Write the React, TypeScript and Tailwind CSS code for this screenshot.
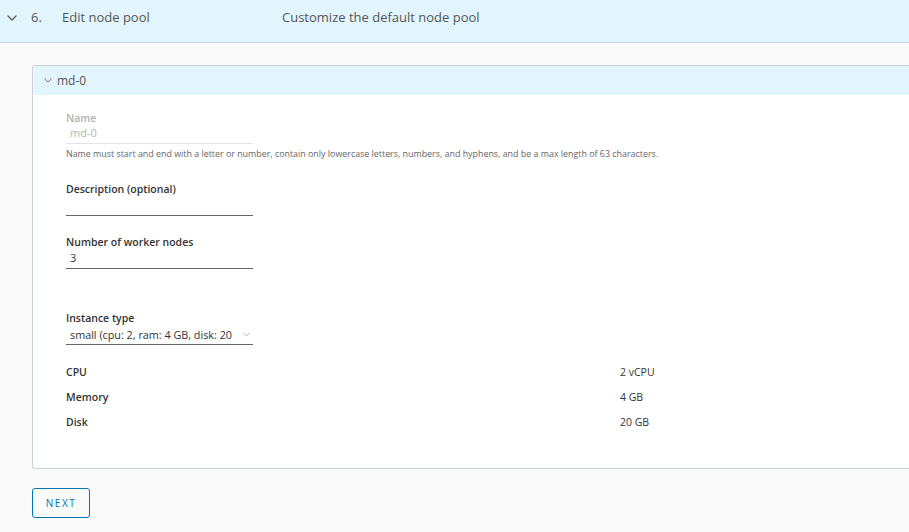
import React from "react";

function Chevron({ className }: { className?: string }) {
  return (
    <svg className={className} viewBox="0 0 10 6" fill="none">
      <path d="M1 1l4 4 4-4" stroke="currentColor" strokeWidth="1.2" strokeLinecap="round" strokeLinejoin="round" />
    </svg>
  );
}

export default function App() {
  return (
    <div className="w-[909px] h-[532px] overflow-hidden bg-[#fafafa] text-[#333]" style={{ fontFamily: "'Open Sans', 'Noto Sans', sans-serif" }}>
      <div className="h-[43px] bg-[#e2f5fd] border-b border-[#c9d4dd] flex items-center pb-[6px] text-[13px] text-[#565656]">
        <Chevron className="w-[10px] h-[6px] ml-[7px] mr-[14px] text-[#555]" />
        <span className="w-[31px]">6.</span>
        <span className="w-[220px]">Edit node pool</span>
        <span>Customize the default node pool</span>
      </div>
      <div className="pl-[32px] pt-[22px]">
        <div className="border border-r-0 border-[#ccd3d8] bg-white rounded-l-[3px] h-[404px]">
          <div className="h-[29px] bg-[#e2f5fd] flex items-center text-[12px] text-[#565656]">
            <Chevron className="w-[8px] h-[5px] ml-[11px] mr-[5px] text-[#666]" />
            <span>md-0</span>
          </div>
          <div className="pl-[33px] pt-[16px]">
            <div className="text-[10.5px] font-semibold text-[#b3b3b3] leading-[14px]">Name</div>
            <div className="w-[187px] border-b border-[#e3e3e3] h-[19px] pl-[4px] text-[11px] text-[#b3b3b3] leading-[16px]">md-0</div>
            <div className="text-[8.9px] text-[#666] mt-[4px] leading-[12px] whitespace-nowrap">Name must start and end with a letter or number, contain only lowercase letters, numbers, and hyphens, and be a max length of 63 characters.</div>

            <div className="mt-[22px] text-[10.5px] font-semibold text-[#333] leading-[14px]">Description (optional)</div>
            <div className="w-[187px] border-b border-[#666] h-[20px]"></div>

            <div className="mt-[19px] text-[10.5px] font-semibold text-[#333] leading-[14px]">Number of worker nodes</div>
            <div className="w-[187px] border-b border-[#666] h-[20px] pl-[4px] text-[11px] text-[#333] leading-[18px]">3</div>

            <div className="mt-[42px] text-[10.5px] font-semibold text-[#333] leading-[14px]">Instance type</div>
            <div className="w-[187px] border-b border-[#666] h-[20px] pl-[4px] text-[10.8px] text-[#333] leading-[18px] flex items-center justify-between pr-[3px]">
              <span className="whitespace-nowrap overflow-hidden">small (cpu: 2, ram: 4 GB, disk: 20</span>
              <Chevron className="w-[7px] h-[5px] text-[#aaa] ml-[2px] shrink-0" />
            </div>

            <div className="mt-[20px] flex flex-col gap-[11px] text-[10.5px] leading-[14px]">
              {[["CPU", "2 vCPU"], ["Memory", "4 GB"], ["Disk", "20 GB"]].map(([k, v]) => (
                <div key={k} className="flex">
                  <span className="w-[554px] font-semibold text-[#333]">{k}</span>
                  <span className="text-[#333]">{v}</span>
                </div>
              ))}
            </div>
          </div>
        </div>
        <button className="mt-[19px] w-[58px] h-[30px] border border-[#0079b8] rounded-[3px] text-[10px] tracking-[1.5px] text-[#0079b8] flex items-center justify-center">NEXT</button>
      </div>
    </div>
  );
}
